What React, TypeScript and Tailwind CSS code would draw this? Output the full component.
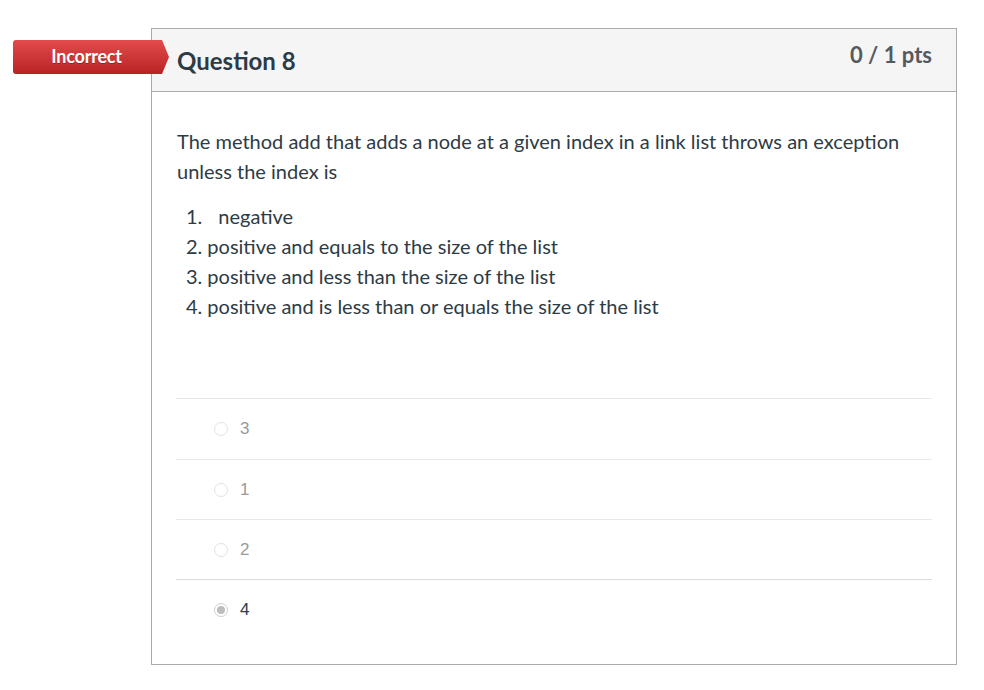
const answers = [
  { label: '3', selected: false },
  { label: '1', selected: false },
  { label: '2', selected: false },
  { label: '4', selected: true },
]

const choices = [
  { num: '1.', text: 'negative', gap: 'ml-[16px]' },
  { num: '2.', text: 'positive and equals to the size of the list', gap: 'ml-[5px]' },
  { num: '3.', text: 'positive and less than the size of the list', gap: 'ml-[5px]' },
  { num: '4.', text: 'positive and is less than or equals the size of the list', gap: 'ml-[5px]' },
]

function Radio({ selected }: { selected: boolean }) {
  return (
    <span
      className={
        selected
          ? 'flex h-[14px] w-[14px] items-center justify-center rounded-full border border-[#cfcfcf] bg-white'
          : 'h-[14px] w-[14px] rounded-full border border-[#e3e3e3] bg-white'
      }
    >
      {selected && <span className="h-[8px] w-[8px] rounded-full bg-[#bdbdbd]" />}
    </span>
  )
}

export default function App() {
  return (
    <div className="relative min-h-[690px] w-[984px] bg-white pl-[151px] pt-[28px] font-['Lato','Liberation_Sans',sans-serif]">
      {/* status ribbon */}
      <div className="absolute left-[13px] top-[40px] flex h-[34px] w-[156px] items-center bg-gradient-to-b from-[#e34a4b] to-[#b82224] pr-[7px] [clip-path:polygon(0_0,149px_0,156px_50%,149px_100%,0_100%)] rounded-l-[3px]">
        <span className="-mt-[1px] w-full pr-[2px] text-center text-[18px] font-bold tracking-[-0.2px] text-white [text-shadow:0_1px_0_rgba(0,0,0,0.25)]">
          Incorrect
        </span>
      </div>

      <div className="flex h-[637px] w-[806px] flex-col border border-[#aaaaaa]">
        {/* header */}
        <div className="flex h-[63px] items-center justify-between border-b border-[#aaaaaa] bg-[#f5f5f5] pl-[25px] pr-[24px]">
          <h2 className="pt-[2px] text-[24px] font-bold text-[#2d3b45]">Question 8</h2>
          <span className="-mt-[12px] text-[22px] font-bold text-[#555a5f]">0 / 1 pts</span>
        </div>

        {/* body */}
        <div className="pl-[25px] pr-[24px] pt-[34px] text-[20px] leading-[30px] text-[#2d3b45]">
          <p>
            The method add that adds a node at a given index in a link list throws an exception
            unless the index is
          </p>
          <div className="mt-[15px] pl-[9px]">
            {choices.map((c) => (
              <div key={c.num} className="flex">
                <span>{c.num}</span>
                <span className={c.gap}>{c.text}</span>
              </div>
            ))}
          </div>
        </div>

        {/* answers */}
        <div className="mt-[77px] px-[24px]">
          {answers.map((a, i) => (
            <div
              key={a.label}
              className={
                i === 0
                  ? 'flex h-[61px] items-center gap-[12px] border-t border-[#e8e8e8] pl-[38px]'
                  : i === answers.length - 1
                    ? 'flex h-[60px] items-center gap-[12px] border-t border-[#dcdcdc] pl-[38px]'
                    : 'flex h-[60px] items-center gap-[12px] border-t border-[#e8e8e8] pl-[38px]'
              }
            >
              <Radio selected={a.selected} />
              <span
                className={
                  a.selected
                    ? "font-['Liberation_Sans',Arial,sans-serif] text-[17px] text-[#2d3b45]"
                    : "font-['Liberation_Sans',Arial,sans-serif] text-[17px] text-[#9a9a9a]"
                }
              >
                {a.label}
              </span>
            </div>
          ))}
        </div>
      </div>
    </div>
  )
}
